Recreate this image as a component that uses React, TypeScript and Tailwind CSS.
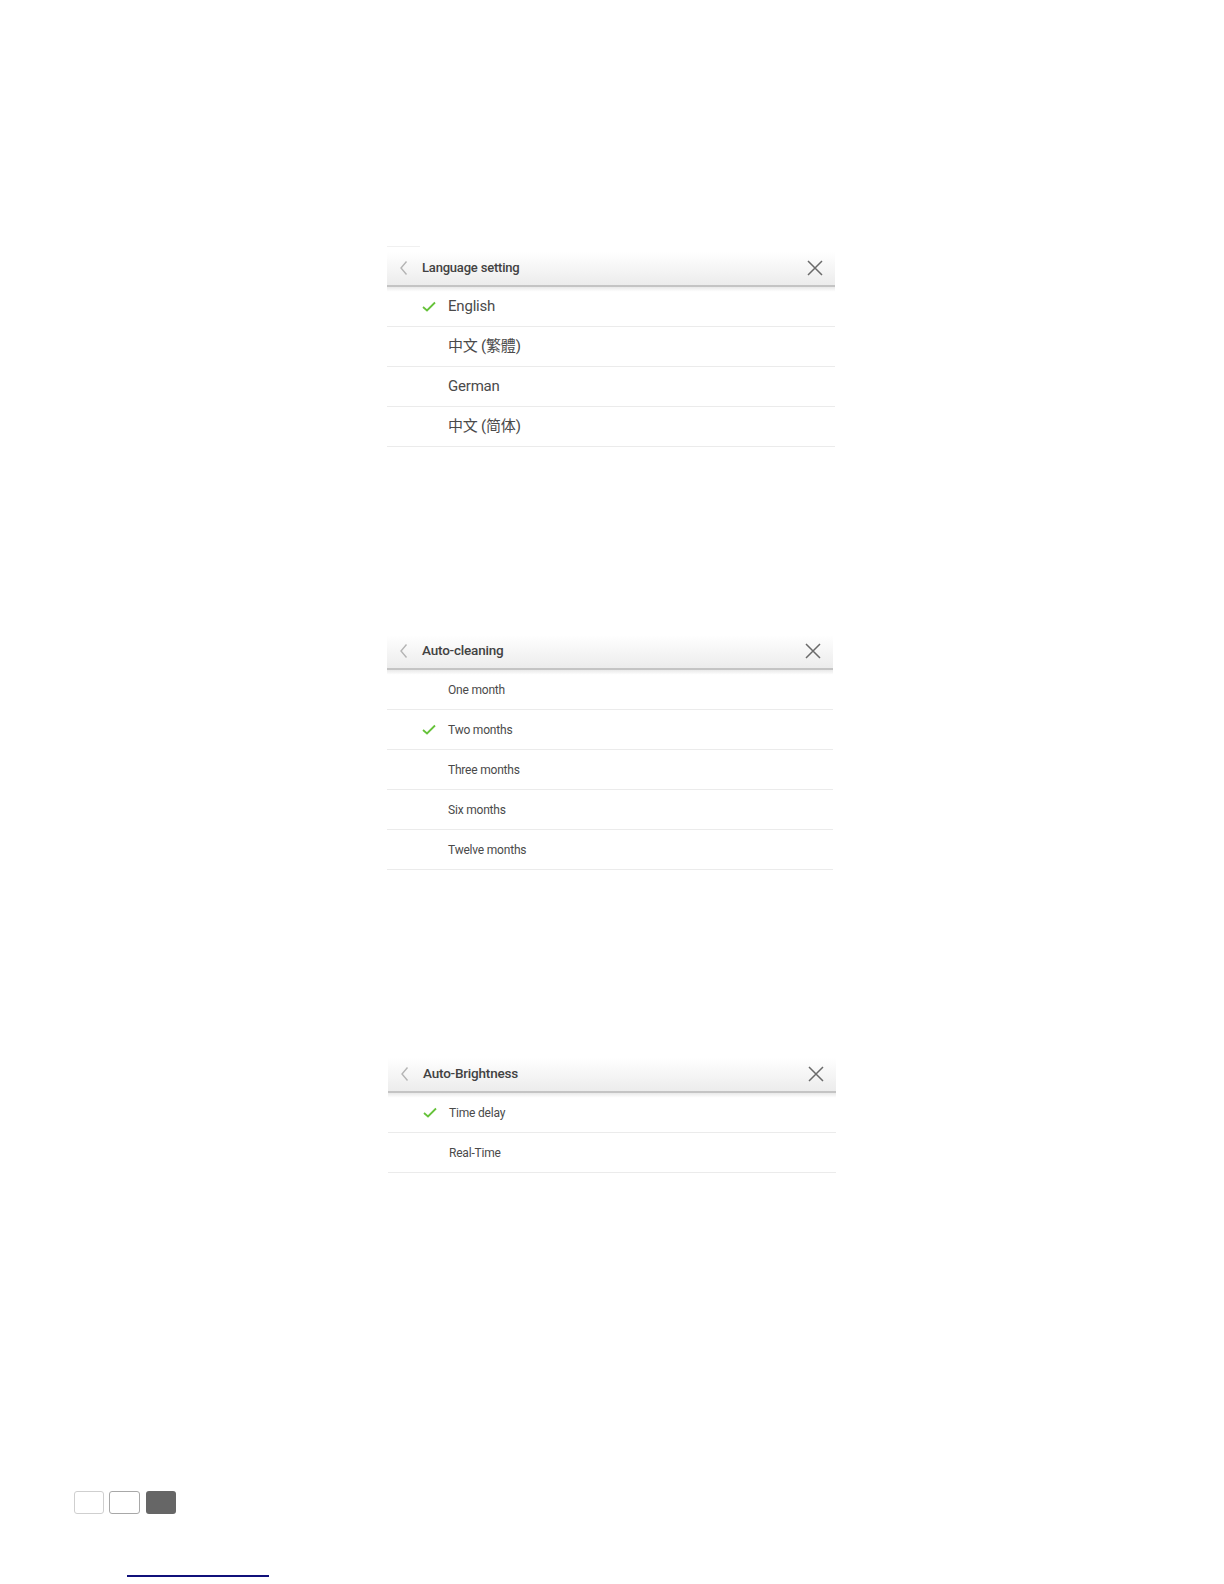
import React from "react";

const font = { fontFamily: "Roboto, 'Noto Sans CJK TC', 'Noto Sans CJK SC', sans-serif" };

function Chevron() {
  return (
    <svg width="10" height="16" viewBox="0 0 10 16" className="shrink-0">
      <path d="M7.5 1.5 L2 8 L7.5 14.5" fill="none" stroke="#b4b4b4" strokeWidth="1.4" />
    </svg>
  );
}

function Close() {
  return (
    <svg width="18" height="18" viewBox="0 0 18 18" className="shrink-0">
      <path d="M2 2 L16 16 M16 2 L2 16" fill="none" stroke="#6a6a6a" strokeWidth="1.5" />
    </svg>
  );
}

function Check() {
  return (
    <svg width="14" height="11" viewBox="0 0 14 11">
      <path d="M1 6 L5 9.5 L13 1.5" fill="none" stroke="#66c23a" strokeWidth="1.8" />
    </svg>
  );
}

interface PanelProps {
  title: string;
  items: string[];
  selected: number;
  itemCls: string;
  titleCls: string;
  cls: string;
}

function Panel({ title, items, selected, itemCls, titleCls, cls }: PanelProps) {
  return (
    <div className={cls}>
      <div className="flex h-[33px] items-center bg-gradient-to-b from-[#ffffff] to-[#ececec] pl-[12px] pr-[11px] pb-[2px]">
        <Chevron />
        <span className={`ml-[13px] text-[#424242] ${titleCls}`}>{title}</span>
        <span className="flex-1" />
        <Close />
      </div>
      <div className="h-[2px] bg-[#c4c4c4]" />
      <div>
        {items.map((t, i) => (
          <div
            key={t}
            className={`flex h-[40px] items-center border-b border-[#ebebeb] ${i === 0 ? "bg-gradient-to-b from-[#e9e9e9] via-[#ffffff] via-[12%] to-[#ffffff]" : ""}`}
          >
            <div className="flex w-[61px] justify-end pr-[12px]">{i === selected && <Check />}</div>
            <span className={`text-[#4a4a4a] ${itemCls}`}>{t}</span>
          </div>
        ))}
      </div>
    </div>
  );
}

export default function App() {
  return (
    <div className="h-[1584px] w-[1224px] overflow-hidden bg-white" style={font}>
      <div className="ml-[387px] mt-[246px] h-px w-[33px] bg-[#f0f0f0]" />
      <Panel
        cls="ml-[387px] mt-[5px] w-[448px]"
        title="Language setting"
        titleCls="text-[13px] font-medium tracking-[-0.2px]"
        items={["English", "中文 (繁體)", "German", "中文 (简体)"]}
        selected={0}
        itemCls="text-[15px] tracking-[-0.2px]"
      />
      <Panel
        cls="ml-[387px] mt-[188px] w-[446px]"
        title="Auto-cleaning"
        titleCls="text-[13.5px] font-medium tracking-[-0.2px]"
        items={["One month", "Two months", "Three months", "Six months", "Twelve months"]}
        selected={1}
        itemCls="text-[12px] tracking-[-0.2px]"
      />
      <Panel
        cls="ml-[388px] mt-[188px] w-[448px]"
        title="Auto-Brightness"
        titleCls="text-[13.5px] font-medium tracking-[-0.2px]"
        items={["Time delay", "Real-Time"]}
        selected={0}
        itemCls="text-[12px] tracking-[-0.2px]"
      />
      <div className="ml-[74px] mt-[318px] flex gap-[5px]">
        <div className="h-[23px] w-[30px] rounded-[3px] border border-[#cfcfcf]" />
        <div className="h-[23px] w-[31px] rounded-[3px] border border-[#a8a8a8]" />
        <div className="ml-[1px] h-[23px] w-[30px] rounded-[3px] bg-[#666666]" />
      </div>
      <div className="ml-[127px] mt-[61px] h-[2px] w-[142px] bg-[#10107a]" />
    </div>
  );
}
